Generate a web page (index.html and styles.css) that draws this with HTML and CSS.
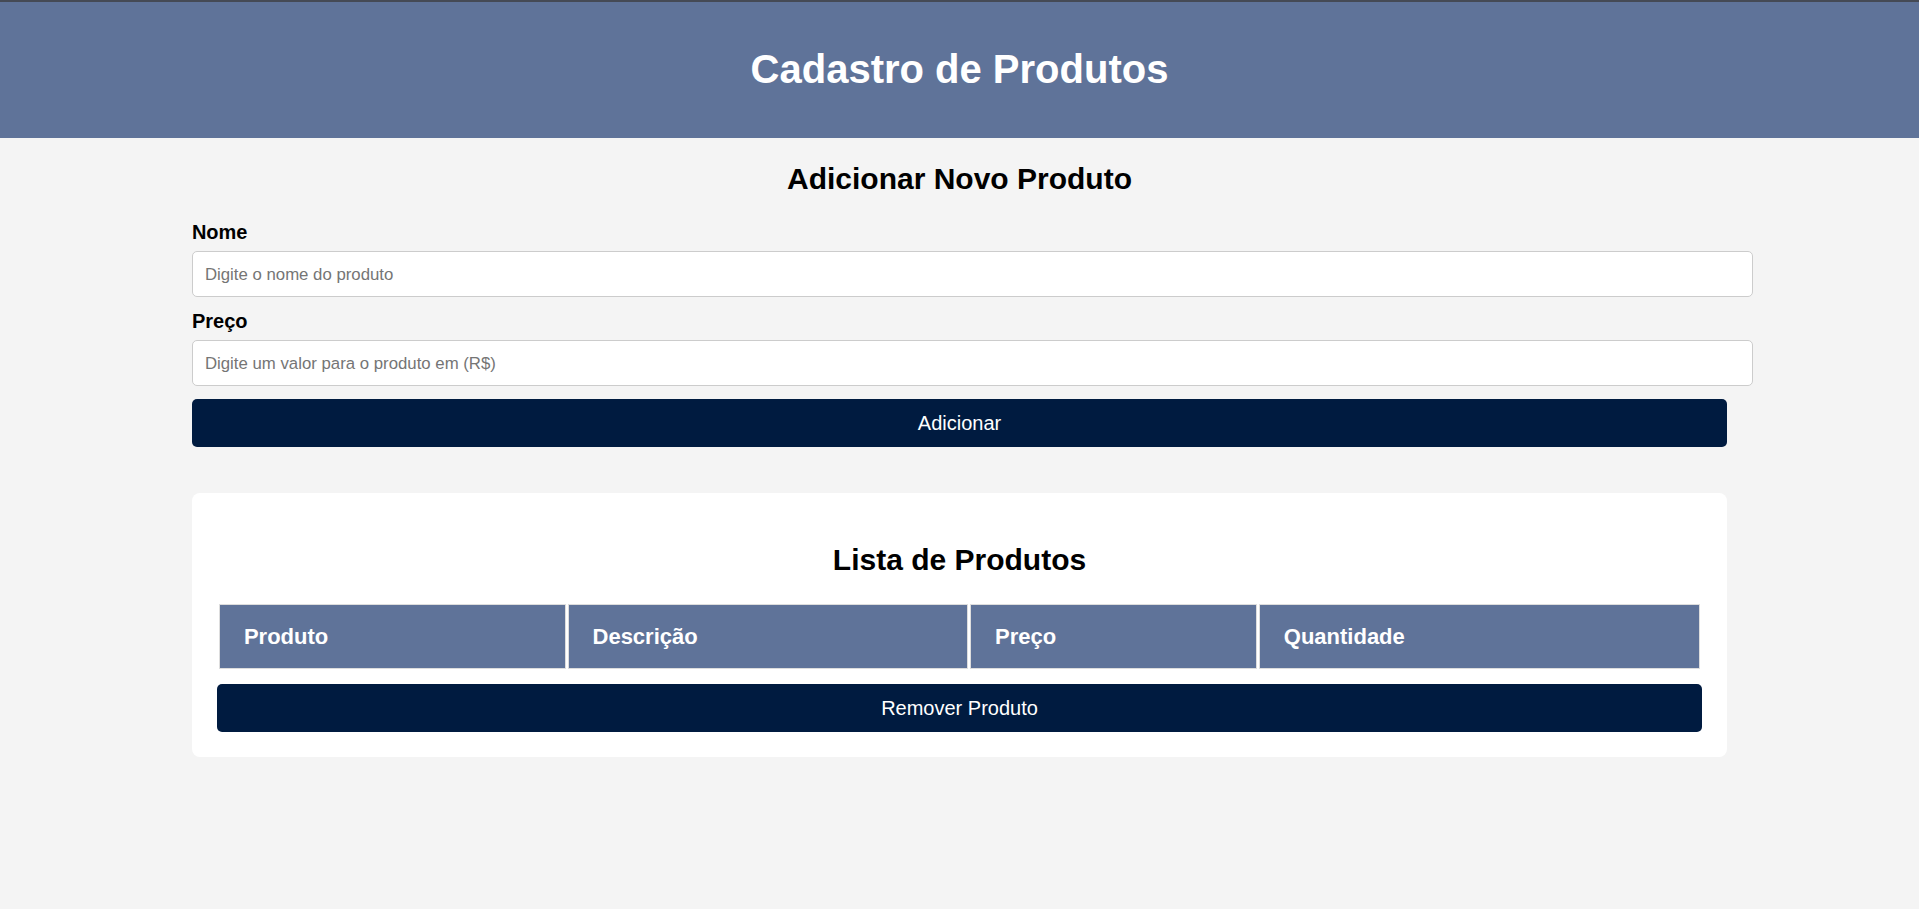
FILE: index.html
```html
<!DOCTYPE html>
<html lang="pt-BR">
<head>
<meta charset="UTF-8">
<title>Cadastro de Produtos</title>
<link rel="stylesheet" href="styles.css">
</head>
<body>
<header class="topbar">
  <h1 class="topbar-title">Cadastro de Produtos</h1>
</header>
<main class="container">
  <section class="form-section">
    <h2 class="section-title form-title">Adicionar Novo Produto</h2>
    <form class="product-form">
      <label class="field-label" for="nome">Nome</label>
      <input class="field-input" id="nome" type="text" placeholder="Digite o nome do produto">
      <label class="field-label" for="preco">Preço</label>
      <input class="field-input" id="preco" type="text" placeholder="Digite um valor para o produto em (R$)">
      <button class="btn" type="button">Adicionar</button>
    </form>
  </section>
  <section class="card">
    <h2 class="section-title card-title">Lista de Produtos</h2>
    <table class="product-table">
      <thead>
        <tr>
          <th>Produto</th>
          <th>Descrição</th>
          <th>Preço</th>
          <th>Quantidade</th>
        </tr>
      </thead>
      <tbody></tbody>
    </table>
    <button class="btn" type="button">Remover Produto</button>
  </section>
</main>
</body>
</html>
```

FILE: styles.css
```css
body {
  margin: 0;
  background: #f4f4f4;
  font-family: "Liberation Sans", Arial, sans-serif;
  color: #000;
}

.topbar {
  background: #5f7399;
  border-top: 2px solid #454a55;
  padding: 44px 0 46px;
  text-align: center;
  color: #fff;
}

.topbar-title {
  margin: 0;
  font-size: 40px;
  line-height: 46px;
  font-weight: bold;
}

.container {
  width: 80%;
  margin: 0 auto;
}

.section-title {
  font-size: 30px;
  line-height: 34px;
  font-weight: bold;
  text-align: center;
}

.form-title {
  margin: 24px 0 25px;
}

.product-form {
  margin: 0;
}

.field-label {
  display: block;
  font-size: 20px;
  line-height: 23px;
  font-weight: bold;
  margin-bottom: 7px;
}

.field-input {
  display: block;
  width: 100%;
  box-sizing: content-box;
  padding: 13px 12px 11px;
  border: 1px solid #ccc;
  border-radius: 5px;
  background: #fff;
  font-family: inherit;
  font-size: 16.8px;
  line-height: 20px;
  margin: 0 0 13px;
  color: #000;
}

.field-input::placeholder {
  color: #757575;
}

.btn {
  display: block;
  width: 100%;
  box-sizing: border-box;
  padding: 12px;
  border: none;
  border-radius: 5px;
  background: #001b40;
  color: #fff;
  font-family: inherit;
  font-size: 20px;
  line-height: 24px;
  cursor: pointer;
}

.card {
  margin-top: 46px;
  background: #fff;
  border-radius: 8px;
  padding: 25px;
}

.card-title {
  margin: 25px 0;
}

.product-table {
  width: 100%;
  border-spacing: 2px;
  margin-bottom: 13px;
}

.product-table th {
  background: #5f7399;
  color: #fff;
  font-size: 22px;
  line-height: 25px;
  font-weight: bold;
  text-align: left;
  padding: 19px 24px;
  border: 1px solid #ddd;
}
```
